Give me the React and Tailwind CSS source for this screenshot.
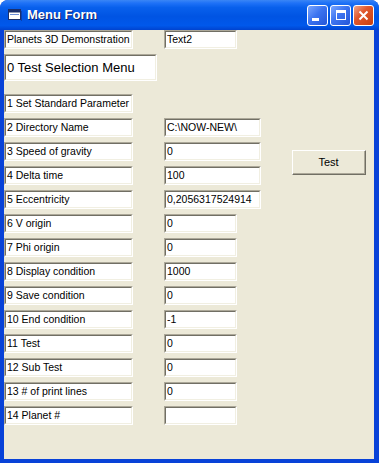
import React from 'react';

const FONT = { fontFamily: '"Liberation Sans", Arial, sans-serif' };

// sunken VB text box
const Box = ({ w, h = 'h-[19px]', text = '', size = 'text-[10.5px]' }) => (
  <div className={`${w} ${h} shrink-0 border-t border-l border-t-[#aca899] border-l-[#aca899] border-b border-r border-b-white border-r-white`}>
    <div className="h-full border-t border-l border-t-[#716f64] border-l-[#716f64] border-b border-r border-b-[#f1efe2] border-r-[#f1efe2] bg-white flex items-center pl-[1px] overflow-hidden">
      <span className={`${size} text-black whitespace-nowrap leading-none`}>{text}</span>
    </div>
  </div>
);

const Row = ({ label, value, wide }) => (
  <div className="flex">
    <Box w="w-[129px]" text={label} />
    <div className="ml-[31px]">
      <Box w={wide ? 'w-[97px]' : 'w-[73px]'} text={value} />
    </div>
  </div>
);

const WinIcon = () => (
  <svg width="14" height="12" viewBox="0 0 14 12">
    <rect x="0.5" y="0.5" width="12" height="10" fill="#fff" stroke="#1b2f6b" />
    <rect x="1" y="1" width="11" height="2.5" fill="#1b2f6b" />
    <rect x="2" y="5" width="9" height="1" fill="#6d8fd8" />
    <rect x="13" y="2" width="1" height="10" fill="#0b2a7a" opacity="0.5" />
  </svg>
);

const CapBtn = ({ children, close }) => (
  <div
    className={`w-[21px] h-[21px] rounded-[3px] border border-white flex items-center justify-center ${
      close
        ? 'bg-[linear-gradient(135deg,#f0a58a_0%,#e0582e_40%,#c8400f_100%)]'
        : 'bg-[linear-gradient(135deg,#7aa6ff_0%,#3c74f0_45%,#2456d8_100%)]'
    }`}
  >
    {children}
  </div>
);

export default function App() {
  const upper = [
    ['2 Directory Name', 'C:\\NOW-NEW\\'],
    ['3 Speed of gravity', '0'],
    ['4 Delta time', '100'],
    ['5 Eccentricity', '0,2056317524914'],
  ];
  const lower = [
    ['6 V origin', '0'],
    ['7 Phi origin', '0'],
    ['8 Display condition', '1000'],
    ['9 Save condition', '0'],
    ['10 End condition', '-1'],
    ['11 Test', '0'],
    ['12 Sub Test', '0'],
    ['13 # of print lines', '0'],
    ['14 Planet #', ''],
  ];

  return (
    <div className="w-[379px] h-[463px] bg-white" style={FONT}>
      <div className="w-full h-full rounded-t-[8px] bg-[#0842d8] flex flex-col overflow-hidden">
        {/* title bar */}
        <div className="h-[30px] shrink-0 flex items-center pl-[8px] pr-[5px] bg-[linear-gradient(to_bottom,#3a86f5_0%,#1f72f7_10%,#0860ec_25%,#0054e3_55%,#0058eb_85%,#0043cf_100%)]">
          <WinIcon />
          <span className="ml-[5px] text-white font-bold text-[13px] [text-shadow:1px_1px_0_#0a1f6b]">Menu Form</span>
          <div className="ml-auto flex gap-[2px]">
            <CapBtn>
              <div className="w-[7px] h-[3px] bg-white mt-[8px] -ml-[4px]" />
            </CapBtn>
            <CapBtn>
              <div className="w-[10px] h-[10px] border border-white border-t-[3px]" />
            </CapBtn>
            <CapBtn close>
              <svg width="11" height="11" viewBox="0 0 11 11">
                <path d="M1.5 1.5 L9.5 9.5 M9.5 1.5 L1.5 9.5" stroke="#fff" strokeWidth="2" />
              </svg>
            </CapBtn>
          </div>
        </div>

        {/* client area */}
        <div className="flex-1 ml-[4px] mr-[5px] mb-[4px] bg-[#ece9d8]">
          <div className="flex">
            <Box w="w-[129px]" text="Planets 3D Demonstration" />
            <div className="ml-[31px]">
              <Box w="w-[73px]" text="Text2" />
            </div>
          </div>

          <div className="mt-[5px]">
            <Box w="w-[153px]" h="h-[27px]" text="0 Test Selection Menu" size="text-[13px]" />
          </div>

          <div className="mt-[13px]">
            <Box w="w-[129px]" text="1 Set Standard Parameter" />
          </div>

          <div className="mt-[5px] flex">
            <div className="flex flex-col gap-[5px]">
              {upper.map(([l, v]) => (
                <Row key={l} label={l} value={v} wide />
              ))}
            </div>
            <button className="ml-[31px] mt-[32px] w-[74px] h-[25px] border border-t-white border-l-white border-b-[#716f64] border-r-[#716f64] bg-[#ece9d8] text-[11px] text-black">
              <div className="h-full border-b border-r border-b-[#aca899] border-r-[#aca899] flex items-center justify-center">
                Test
              </div>
            </button>
          </div>

          <div className="mt-[5px] flex flex-col gap-[5px]">
            {lower.map(([l, v]) => (
              <Row key={l} label={l} value={v} />
            ))}
          </div>
        </div>
      </div>
    </div>
  );
}
